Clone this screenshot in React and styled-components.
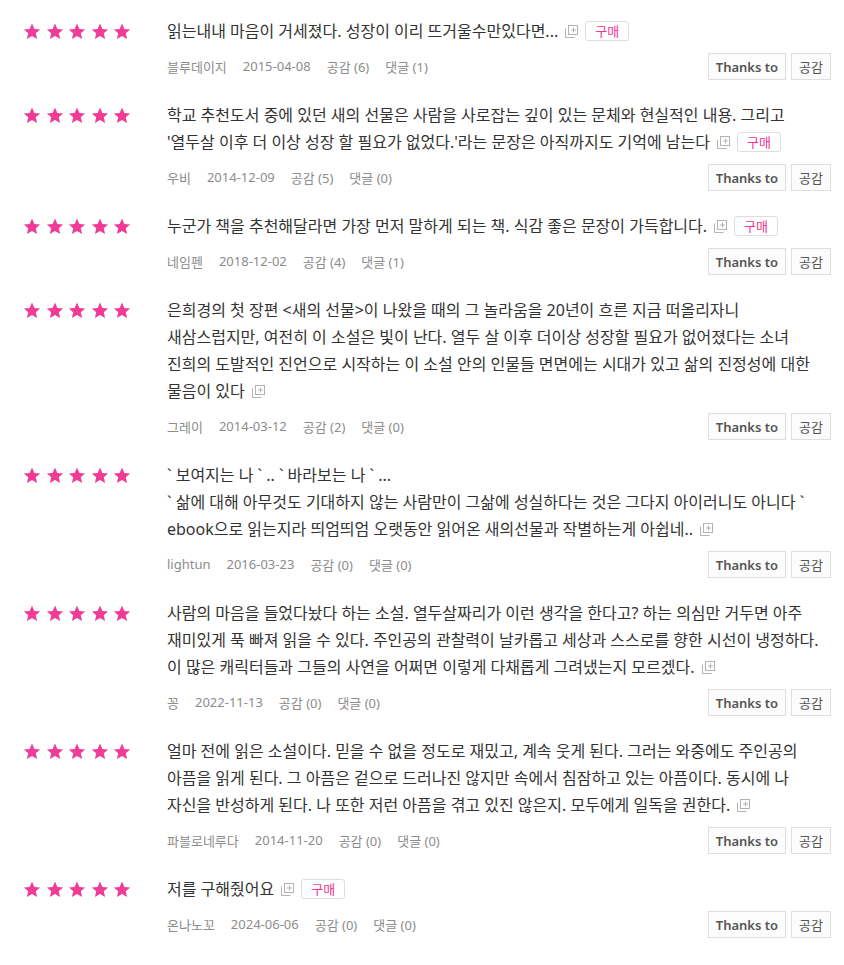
import React from 'react'
import styled, { createGlobalStyle } from 'styled-components'

const GlobalStyle = createGlobalStyle`
  body {
    margin: 0;
    background: #fff;
    font-family: "Noto Sans", "Noto Sans CJK KR", sans-serif;
  }
`

const reviews = [
  {
    lines: ['읽는내내 마음이 거세졌다. 성장이 이리 뜨거울수만있다면...'],
    buy: true,
    user: '블루데이지', date: '2015-04-08', likes: 6, comments: 1,
  },
  {
    lines: [
      '학교 추천도서 중에 있던 새의 선물은 사람을 사로잡는 깊이 있는 문체와 현실적인 내용. 그리고',
      '\'열두살 이후 더 이상 성장 할 필요가 없었다.\'라는 문장은 아직까지도 기억에 남는다',
    ],
    buy: true,
    user: '우비', date: '2014-12-09', likes: 5, comments: 0,
  },
  {
    lines: ['누군가 책을 추천해달라면 가장 먼저 말하게 되는 책. 식감 좋은 문장이 가득합니다.'],
    buy: true,
    user: '네임펜', date: '2018-12-02', likes: 4, comments: 1,
  },
  {
    lines: [
      '은희경의 첫 장편 <새의 선물>이 나왔을 때의 그 놀라움을 20년이 흐른 지금 떠올리자니',
      '새삼스럽지만, 여전히 이 소설은 빛이 난다. 열두 살 이후 더이상 성장할 필요가 없어졌다는 소녀',
      '진희의 도발적인 진언으로 시작하는 이 소설 안의 인물들 면면에는 시대가 있고 삶의 진정성에 대한',
      '물음이 있다',
    ],
    user: '그레이', date: '2014-03-12', likes: 2, comments: 0,
  },
  {
    lines: [
      '` 보여지는 나 ` .. ` 바라보는 나 ` ...',
      '` 삶에 대해 아무것도 기대하지 않는 사람만이 그삶에 성실하다는 것은 그다지 아이러니도 아니다 `',
      'ebook으로 읽는지라 띄엄띄엄 오랫동안 읽어온 새의선물과 작별하는게 아쉽네..',
    ],
    user: 'lightun', date: '2016-03-23', likes: 0, comments: 0,
  },
  {
    lines: [
      '사람의 마음을 들었다놨다 하는 소설. 열두살짜리가 이런 생각을 한다고? 하는 의심만 거두면 아주',
      '재미있게 푹 빠져 읽을 수 있다. 주인공의 관찰력이 날카롭고 세상과 스스로를 향한 시선이 냉정하다.',
      '이 많은 캐릭터들과 그들의 사연을 어쩌면 이렇게 다채롭게 그려냈는지 모르겠다.',
    ],
    user: '꽁', date: '2022-11-13', likes: 0, comments: 0,
  },
  {
    lines: [
      '얼마 전에 읽은 소설이다. 믿을 수 없을 정도로 재밌고, 계속 웃게 된다. 그러는 와중에도 주인공의',
      '아픔을 읽게 된다. 그 아픔은 겉으로 드러나진 않지만 속에서 침잠하고 있는 아픔이다. 동시에 나',
      '자신을 반성하게 된다. 나 또한 저런 아픔을 겪고 있진 않은지. 모두에게 일독을 권한다.',
    ],
    user: '파블로네루다', date: '2014-11-20', likes: 0, comments: 0,
  },
  {
    lines: ['저를 구해줬어요'],
    buy: true,
    user: '온나노꼬', date: '2024-06-06', likes: 0, comments: 0,
  },
]

const Star = () => (
  <svg width="18" height="17" viewBox="0 0 24 23">
    <polygon
      fill="#f03c96"
      points="12,0.8 15.2,8 23,8.7 17.1,13.9 18.9,21.6 12,17.6 5.1,21.6 6.9,13.9 1,8.7 8.8,8"
    />
  </svg>
)

const MoreIcon = () => (
  <MoreSvg width="13" height="13" viewBox="0 0 13 13">
    <path d="M0.5 3.5v9h9" fill="none" stroke="#b3b3b3" />
    <rect x="3.5" y="0.5" width="9" height="9" fill="#fff" stroke="#b3b3b3" />
    <path d="M6 5h5M8.5 2.5v5" stroke="#b3b3b3" />
  </MoreSvg>
)

const ReviewList = () => (
  <List>
    {reviews.map((r, i) => (
      <Row key={i}>
        <Stars>
          {[0, 1, 2, 3, 4].map((s) => <Star key={s} />)}
        </Stars>
        <Content>
          <Text>
            {r.lines.map((line, j) => (
              <React.Fragment key={j}>
                {j > 0 && <br />}
                {line}
              </React.Fragment>
            ))}
            <MoreIcon />
            {r.buy && <BuyTag>구매</BuyTag>}
          </Text>
          <Meta>
            <Info>
              <span>{r.user}</span>
              <span>{r.date}</span>
              <span>공감 ({r.likes})</span>
              <span>댓글 ({r.comments})</span>
            </Info>
            <Actions>
              <ActionButton bold>Thanks to</ActionButton>
              <ActionButton>공감</ActionButton>
            </Actions>
          </Meta>
        </Content>
      </Row>
    ))}
  </List>
)

const App = () => (
  <>
    <GlobalStyle />
    <ReviewList />
  </>
)

const List = styled.div`
  padding: 8px 13px 0 23px;
`

const Row = styled.div`
  display: flex;
  padding: 10px 0 12px;
`

const Stars = styled.div`
  width: 144px;
  flex-shrink: 0;
  height: 27px;
  display: flex;
  align-items: center;
  gap: 4.5px;
`

const Content = styled.div`
  flex: 1;
  min-width: 0;
`

const Text = styled.div`
  font-size: 16px;
  line-height: 27px;
  color: #333;
  white-space: nowrap;
`

const MoreSvg = styled.svg`
  margin-left: 7px;
  vertical-align: -1px;
`

const BuyTag = styled.span`
  display: inline-block;
  margin-left: 7px;
  height: 20px;
  line-height: 18px;
  padding: 0 9px;
  box-sizing: border-box;
  border: 1px solid #ddd;
  border-radius: 3px;
  font-size: 13px;
  color: #f0388f;
  vertical-align: 1px;
`

const Meta = styled.div`
  margin-top: 8px;
  display: flex;
  align-items: center;
  justify-content: space-between;
`

const Info = styled.div`
  display: flex;
  gap: 16px;
  font-size: 13px;
  color: #8c8c8c;
`

const Actions = styled.div`
  display: flex;
  gap: 5px;
`

const ActionButton = styled.button`
  height: 27px;
  padding: 0 7px;
  border: 1px solid #dedede;
  background: #fcfcfc;
  color: #555;
  font-family: "Noto Sans", "Noto Sans CJK KR", sans-serif;
  font-size: 13px;
  font-weight: ${(p) => (p.bold ? 600 : 400)};
  cursor: pointer;
`

export default App
